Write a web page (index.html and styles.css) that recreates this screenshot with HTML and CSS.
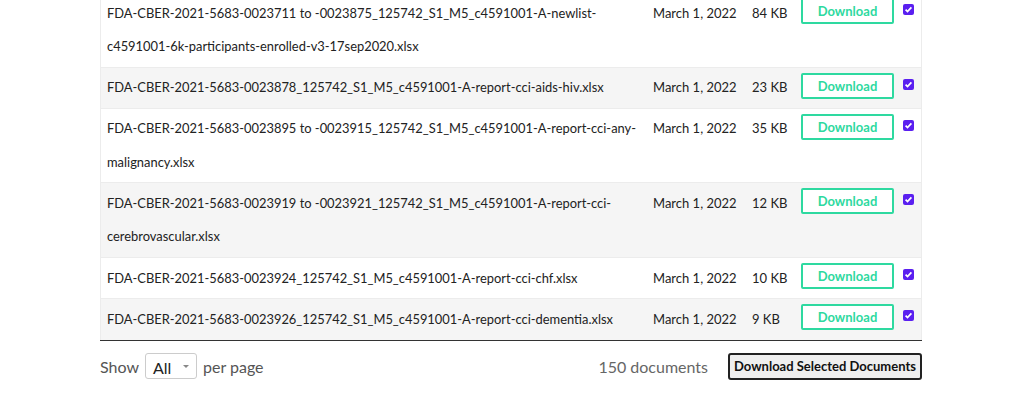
FILE: index.html
```html
<!DOCTYPE html>
<html>
<head>
<meta charset="utf-8">
<link rel="stylesheet" href="styles.css">
</head>
<body>
<div class="wrap">
  <table class="docs">
    <tbody>
      <tr>
        <td class="name">FDA-CBER-2021-5683-0023711 to -0023875_125742_S1_M5_c4591001-A-newlist-c4591001-6k-participants-enrolled-v3-17sep2020.xlsx</td>
        <td class="date">March 1, 2022</td>
        <td class="size">84 KB</td>
        <td class="act"><button class="dl">Download</button></td>
        <td class="chk"><span class="box"><svg viewBox="0 0 11 11" width="11" height="11"><path d="M2.6 5.6 L4.5 7.5 L8.4 3.3" fill="none" stroke="#fff" stroke-width="1.7"/></svg></span></td>
      </tr>
      <tr class="alt">
        <td class="name">FDA-CBER-2021-5683-0023878_125742_S1_M5_c4591001-A-report-cci-aids-hiv.xlsx</td>
        <td class="date">March 1, 2022</td>
        <td class="size">23 KB</td>
        <td class="act"><button class="dl">Download</button></td>
        <td class="chk"><span class="box"><svg viewBox="0 0 11 11" width="11" height="11"><path d="M2.6 5.6 L4.5 7.5 L8.4 3.3" fill="none" stroke="#fff" stroke-width="1.7"/></svg></span></td>
      </tr>
      <tr>
        <td class="name">FDA-CBER-2021-5683-0023895 to -0023915_125742_S1_M5_c4591001-A-report-cci-any-malignancy.xlsx</td>
        <td class="date">March 1, 2022</td>
        <td class="size">35 KB</td>
        <td class="act"><button class="dl">Download</button></td>
        <td class="chk"><span class="box"><svg viewBox="0 0 11 11" width="11" height="11"><path d="M2.6 5.6 L4.5 7.5 L8.4 3.3" fill="none" stroke="#fff" stroke-width="1.7"/></svg></span></td>
      </tr>
      <tr class="alt">
        <td class="name">FDA-CBER-2021-5683-0023919 to -0023921_125742_S1_M5_c4591001-A-report-cci-cerebrovascular.xlsx</td>
        <td class="date">March 1, 2022</td>
        <td class="size">12 KB</td>
        <td class="act"><button class="dl">Download</button></td>
        <td class="chk"><span class="box"><svg viewBox="0 0 11 11" width="11" height="11"><path d="M2.6 5.6 L4.5 7.5 L8.4 3.3" fill="none" stroke="#fff" stroke-width="1.7"/></svg></span></td>
      </tr>
      <tr>
        <td class="name">FDA-CBER-2021-5683-0023924_125742_S1_M5_c4591001-A-report-cci-chf.xlsx</td>
        <td class="date">March 1, 2022</td>
        <td class="size">10 KB</td>
        <td class="act"><button class="dl">Download</button></td>
        <td class="chk"><span class="box"><svg viewBox="0 0 11 11" width="11" height="11"><path d="M2.6 5.6 L4.5 7.5 L8.4 3.3" fill="none" stroke="#fff" stroke-width="1.7"/></svg></span></td>
      </tr>
      <tr class="alt last">
        <td class="name">FDA-CBER-2021-5683-0023926_125742_S1_M5_c4591001-A-report-cci-dementia.xlsx</td>
        <td class="date">March 1, 2022</td>
        <td class="size">9 KB</td>
        <td class="act"><button class="dl">Download</button></td>
        <td class="chk"><span class="box"><svg viewBox="0 0 11 11" width="11" height="11"><path d="M2.6 5.6 L4.5 7.5 L8.4 3.3" fill="none" stroke="#fff" stroke-width="1.7"/></svg></span></td>
      </tr>
    </tbody>
  </table>
  <div class="footer">
    <div class="show">
      <span>Show</span>
      <span class="select"><span class="sel-val">All</span><span class="caret"></span></span>
      <span>per page</span>
    </div>
    <div class="right">
      <span class="count">150 documents</span>
      <button class="dlall">Download Selected Documents</button>
    </div>
  </div>
</div>
</body>
</html>
```

FILE: styles.css
```css
html, body {
  margin: 0;
  padding: 0;
  background: #fff;
}
body {
  font-family: Lato, "Open Sans", sans-serif;
  color: #222;
}
.wrap {
  width: 822px;
  margin: -8px 0 0 100px;
}
.docs {
  width: 822px;
  border-collapse: collapse;
  border-left: 1px solid #ececec;
  border-right: 1px solid #ececec;
  border-bottom: 1px solid #333;
}
.docs tr {
  border-top: 1px solid #ececec;
}
.docs tr.alt {
  background: #f5f5f5;
}
.docs td {
  vertical-align: top;
  padding: 3.5px 0;
  font-size: 13px;
  line-height: 33.3px;
}
.docs td.name {
  padding-left: 6px;
  padding-right: 12px;
  width: 534px;
  font-size: 12.9px;
}
.docs td.date {
  width: 99px;
  white-space: nowrap;
}
.docs td.size {
  width: 49px;
  white-space: nowrap;
}
.docs td.act {
  width: 101px;
  padding-top: 5px;
}
.docs td.chk {
  padding-top: 11px;
  line-height: 11px;
}
.dl {
  display: block;
  width: 93px;
  height: 26px;
  box-sizing: border-box;
  border: 2px solid #2ed9a0;
  border-radius: 2px;
  background: #fff;
  color: #2ed9a0;
  font-family: Lato, sans-serif;
  font-weight: 700;
  font-size: 13px;
  padding: 0;
  line-height: 22px;
}
.box {
  display: block;
  width: 11px;
  height: 11px;
  margin-left: 1px;
  background: #5a1ff0;
  border-radius: 2px;
}
.box svg {
  display: block;
}
.footer {
  display: flex;
  justify-content: space-between;
  align-items: center;
  margin-top: 12px;
}
.show {
  display: flex;
  align-items: center;
  gap: 6px;
  font-size: 16px;
  color: #555;
}
.select {
  display: flex;
  align-items: center;
  width: 52px;
  height: 26px;
  box-sizing: border-box;
  border: 1px solid #ccc;
  border-radius: 3px;
  padding-left: 7px;
  color: #222;
  font-size: 16px;
}
.sel-val {
  flex: 1;
  padding-top: 3px;
}
.caret {
  width: 0;
  height: 0;
  border-left: 3px solid transparent;
  border-right: 3px solid transparent;
  border-top: 3px solid #888;
  margin-right: 7px;
}
.right {
  display: flex;
  align-items: center;
  gap: 20px;
}
.count {
  font-size: 16px;
  color: #666;
}
.dlall {
  height: 27px;
  width: 194px;
  box-sizing: border-box;
  border: 2px solid #222;
  border-radius: 3px;
  background: #efefef;
  color: #111;
  font-family: Lato, sans-serif;
  font-weight: 700;
  font-size: 13px;
  padding: 0;
  white-space: nowrap;
}
```
